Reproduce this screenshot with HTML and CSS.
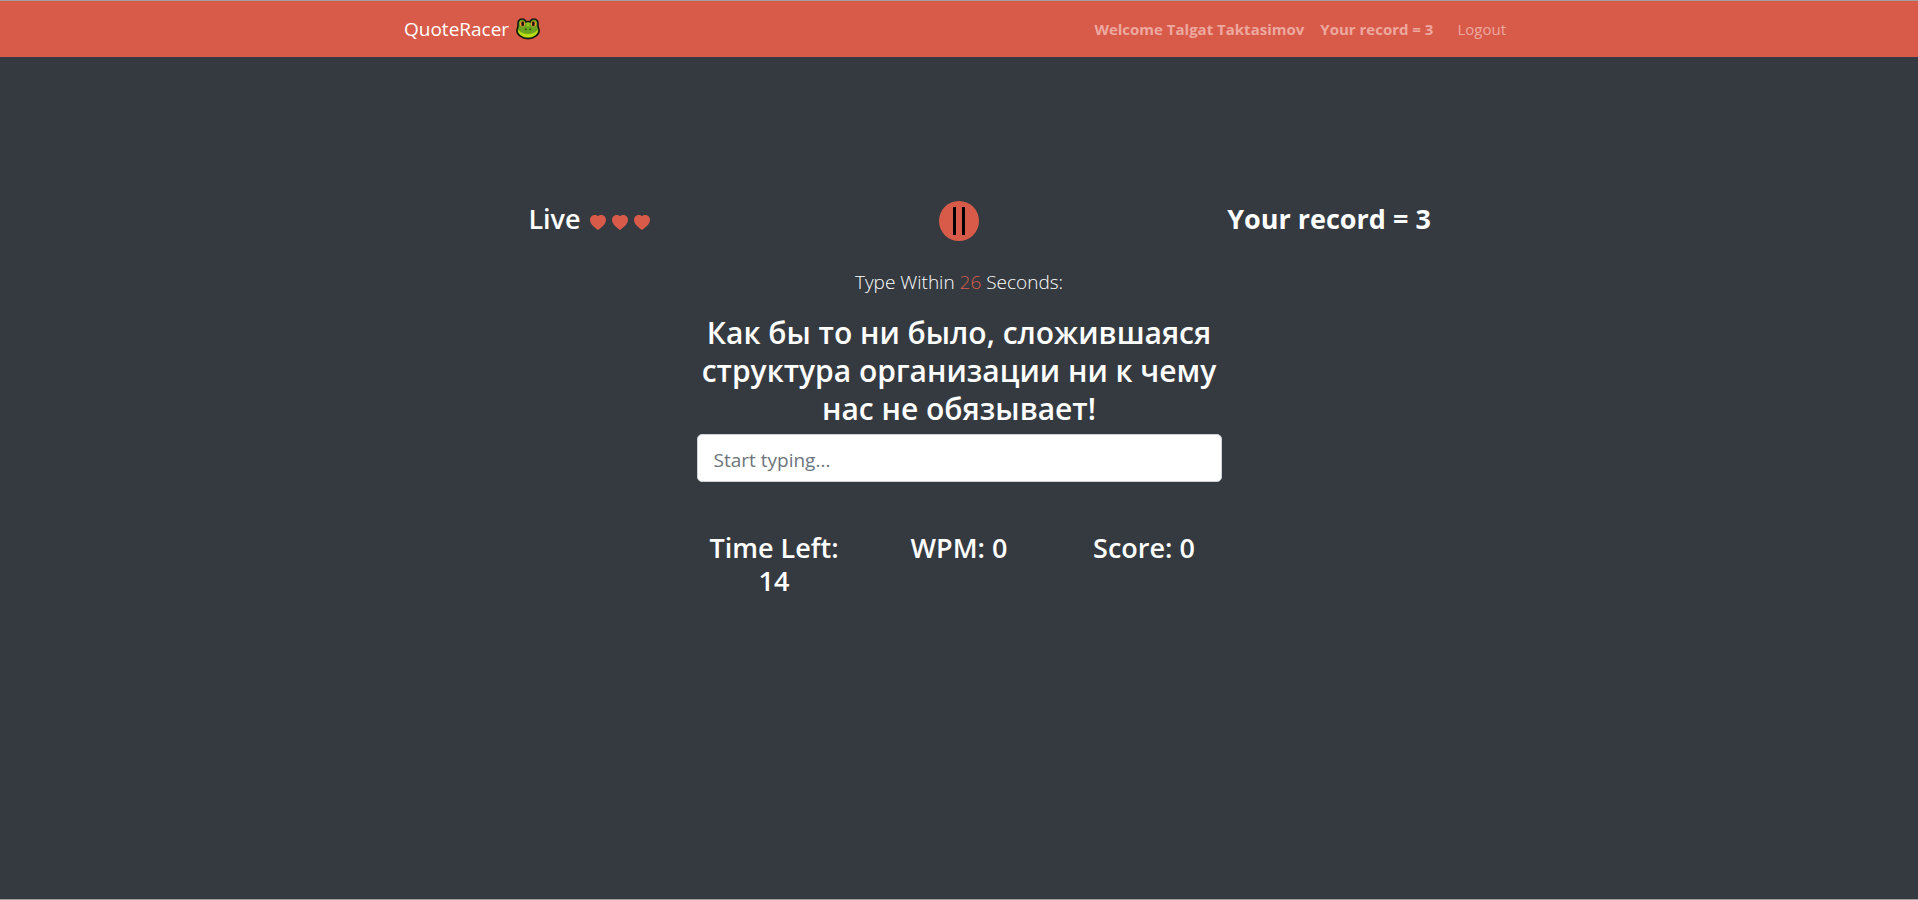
FILE: index.html
```html
<!DOCTYPE html>
<html lang="en">
<head>
<meta charset="utf-8">
<meta name="viewport" content="width=device-width, initial-scale=1">
<title>QuoteRacer</title>
<link rel="stylesheet" href="styles.css">
</head>
<body>
<svg class="sprite" aria-hidden="true">
  <symbol id="heart" viewBox="0 0 16 16"><path fill-rule="evenodd" d="M8 1.314C12.438-3.248 23.534 4.735 8 15-7.534 4.736 3.562-3.248 8 1.314z"/></symbol>
</svg>
<header class="navbar">
  <div class="container navbar-inner">
    <a class="brand" href="#">QuoteRacer
      <svg class="frog" viewBox="0 0 24 22" aria-hidden="true">
        <path d="M6 1C3.200 1 1.800 3.200 2 6c.1 1.500.1 2.500-.4 3.700C.2 13 .9 15.900 4.300 18.200 8.600 21.400 15.400 21.400 19.700 18.200c3.400-2.300 4.100-5.200 2.700-8.500C21.900 8.500 21.900 7.500 22 6c.2-2.800-1.200-5-4-5-2 0-3.300 1-3.900 2.800C12.700 3.400 11.300 3.400 9.900 3.800 9.300 2 8 1 6 1z" fill="#6ca320"/>
        <path d="M1.600 11.500C1.400 16.500 7 19.800 12 19.800s10.600-3.300 10.400-8.300C19.500 14.500 16 16 12 16s-7.500-1.500-10.400-4.500z" fill="#b9dc13"/>
        <path d="M10 4.500h4l-1 4h-2z" fill="#94c81a"/>
        <path d="M6 1C3.200 1 1.800 3.200 2 6c.1 1.500.1 2.500-.4 3.700C.2 13 .9 15.900 4.300 18.200 8.600 21.400 15.400 21.400 19.700 18.200c3.400-2.300 4.100-5.200 2.700-8.500C21.900 8.500 21.900 7.500 22 6c.2-2.800-1.200-5-4-5-2 0-3.300 1-3.900 2.800C12.700 3.400 11.300 3.400 9.900 3.800 9.300 2 8 1 6 1z" fill="none" stroke="#151a0c" stroke-width="1.600"/>
        <rect x="4" y="3.200" width="5" height="5.400" rx="2" fill="#f29a2e"/>
        <rect x="15" y="3.200" width="5" height="5.400" rx="2" fill="#f29a2e"/>
        <rect x="5.400" y="3.600" width="2.600" height="4.400" rx="1" fill="#241008"/>
        <rect x="16" y="3.600" width="2.600" height="4.400" rx="1" fill="#241008"/>
        <circle cx="9.800" cy="11.300" r=".9" fill="#24420c"/>
        <circle cx="14.200" cy="11.300" r=".9" fill="#24420c"/>
      </svg>
    </a>
    <nav class="nav">
      <strong class="welcome">Welcome Talgat Taktasimov</strong>
      <strong class="record">Your record = 3</strong>
      <a class="logout" href="#">Logout</a>
    </nav>
  </div>
</header>
<main class="container">
  <section class="status">
    <h3 class="title">Live
      <span class="hearts">
        <svg viewBox="0 0 16 16"><use href="#heart"/></svg>
        <svg viewBox="0 0 16 16"><use href="#heart"/></svg>
        <svg viewBox="0 0 16 16"><use href="#heart"/></svg>
      </span>
    </h3>
    <button class="pause" type="button" aria-label="Pause">
      <svg viewBox="0 0 40 40" aria-hidden="true"><path d="M14 6h3v28h-3zM23 6h3v28h-3z"/></svg>
    </button>
    <h3 class="title title-bold">Your record = 3</h3>
  </section>
  <section class="game">
    <p class="lead">Type Within <span class="seconds">26</span> Seconds:</p>
    <h2 class="quote"><label for="word">Как бы то ни было, сложившаяся структура организации ни к чему нас не обязывает!</label></h2>
    <input class="word" id="word" type="text" placeholder="Start typing..." autocomplete="off">
    <div class="stats">
      <h3 class="title">Time Left: 14</h3>
      <h3 class="title">WPM: 0</h3>
      <h3 class="title">Score: 0</h3>
    </div>
  </section>
</main>
</body>
</html>
```
FILE: styles.css
```css
* {
  box-sizing: border-box;
}

body {
  margin: 0;
  min-height: 100vh;
  background: #343a40;
  border-top: 1px solid #a0a0a0;
  border-bottom: 1px solid #a0a0a0;
  color: #fff;
  font: 400 16px/24px "Open Sans", "Noto Sans", sans-serif;
}

.sprite {
  display: none;
}

.container {
  width: 100%;
  max-width: 1140px;
  margin: 0 auto;
  padding: 0 15px;
}

.navbar {
  background: #d85b4a;
}

.navbar-inner {
  display: flex;
  align-items: center;
  justify-content: space-between;
  height: 56px;
}

.brand {
  display: flex;
  align-items: center;
  gap: 7px;
  color: #fff;
  font-size: 19px;
  text-decoration: none;
}

.frog {
  width: 24px;
  height: 22px;
}

.nav {
  display: flex;
  align-items: center;
  padding-right: 8px;
  color: #eda89f;
  font-size: 15px;
}

.record {
  margin: 0 24px 0 16px;
}

.logout {
  color: inherit;
  text-decoration: none;
}

.status {
  display: grid;
  grid-template-columns: repeat(3, 1fr);
  justify-items: center;
  padding-top: 144px;
}

.title {
  margin: 0;
  font-size: 27px;
  font-weight: 600;
  line-height: 33px;
}

.status .title {
  padding-top: 1px;
}

.title-bold {
  font-weight: 700;
}

.hearts {
  display: inline-flex;
  gap: 6px;
  margin-left: 2px;
  vertical-align: -2px;
}

.hearts svg {
  width: 16px;
  height: 16px;
  fill: #d85b4a;
}

.pause {
  width: 40px;
  height: 40px;
  padding: 0;
  border: 0;
  border-radius: 50%;
  background: #d85b4a;
}

.pause svg {
  display: block;
}

.game {
  max-width: 525px;
  margin: 0 auto;
  text-align: center;
}

.lead {
  margin: 26px 0 17px;
  font-size: 19px;
  font-weight: 300;
  line-height: 30px;
}

.seconds {
  color: #d85b4a;
}

.quote {
  margin: 0 0 6px;
  font-size: 30px;
  font-weight: 600;
  line-height: 38px;
}

.word {
  display: block;
  width: 100%;
  height: 48px;
  padding: 10px 16px 6px;
  border: 1px solid #ced4da;
  border-radius: 5px;
  background: #fff;
  color: #495057;
  font: inherit;
  font-size: 19px;
}

.word::placeholder {
  color: #6c757d;
  opacity: 1;
}

.stats {
  display: grid;
  grid-template-columns: repeat(3, 1fr);
  gap: 30px;
  margin-top: 49px;
}
```
